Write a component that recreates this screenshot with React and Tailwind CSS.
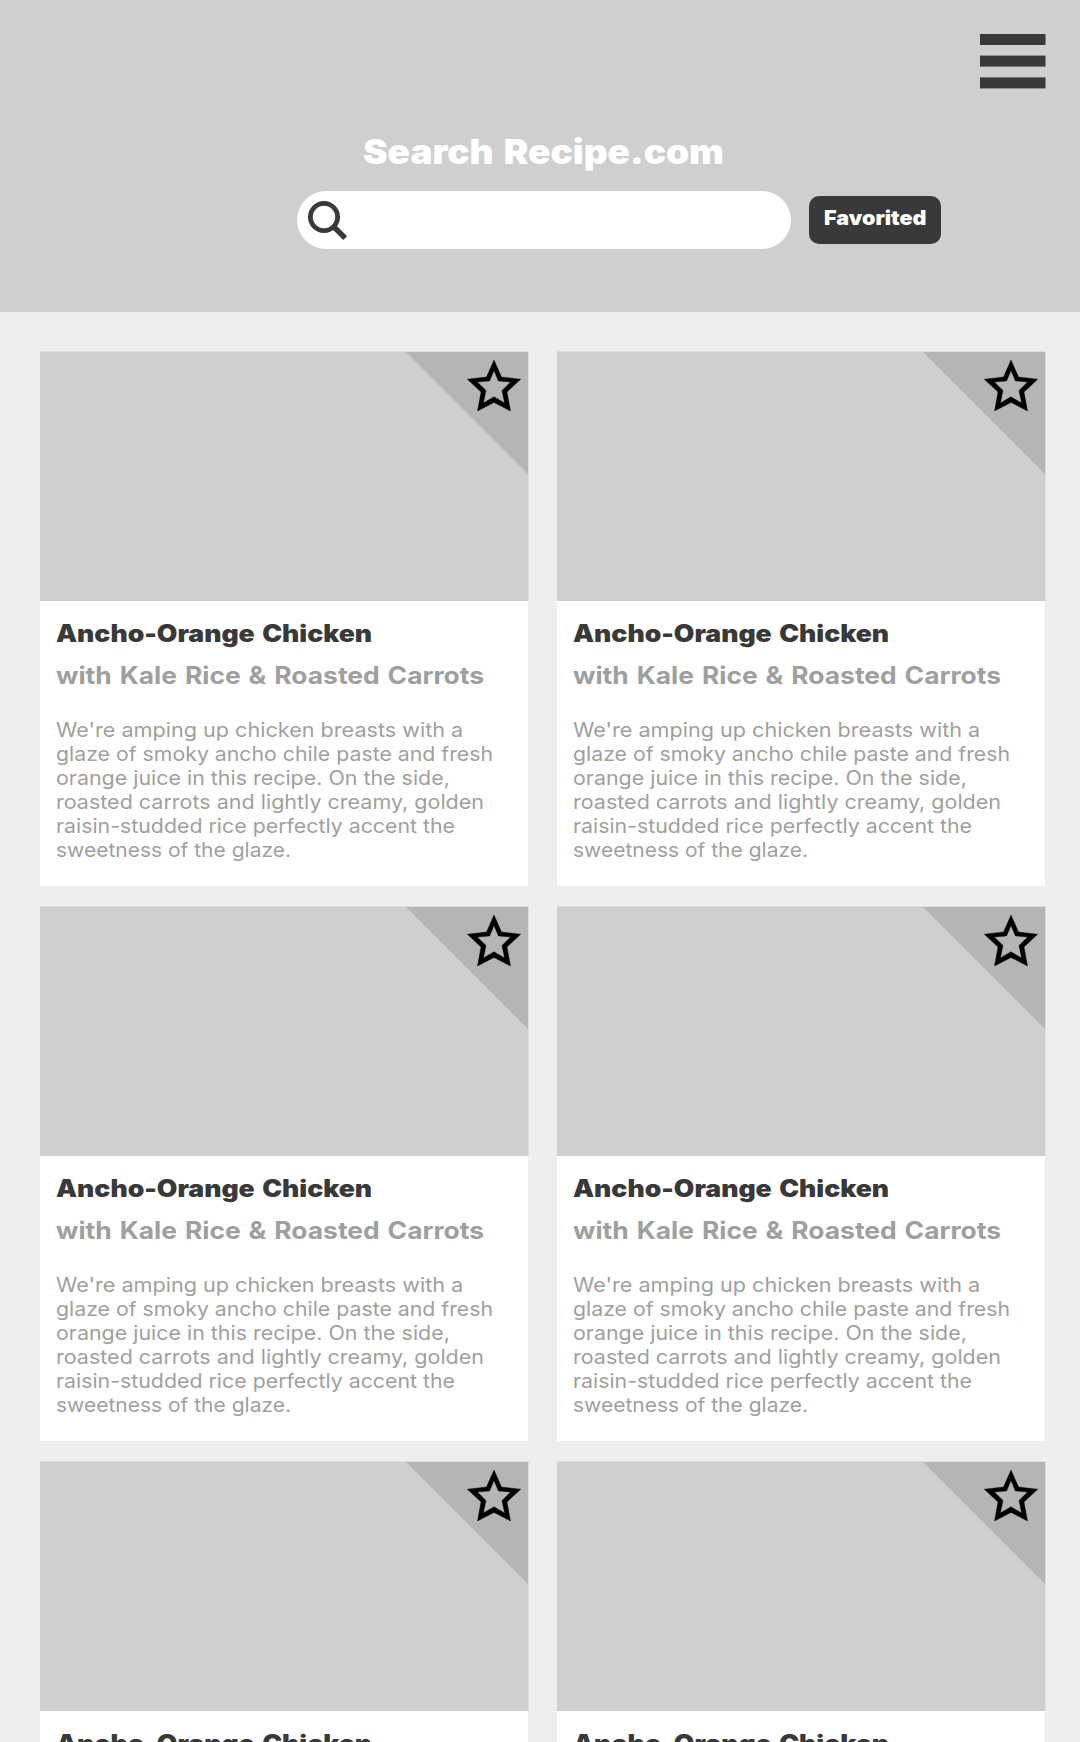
const DESCRIPTION = [
  ["We're amping up chicken breasts with a", 'scale-x-[1.108]'],
  ['glaze of smoky ancho chile paste and fresh', 'scale-x-[1.091]'],
  ['orange juice in this recipe. On the side,', 'scale-x-[1.098]'],
  ['roasted carrots and lightly creamy, golden', 'scale-x-[1.103]'],
  ['raisin-studded rice perfectly accent the', 'scale-x-[1.094]'],
  ['sweetness of the glaze.', 'scale-x-[1.077]'],
];

function Star() {
  return (
    <svg className="absolute right-[7px] top-[8px] h-[53px] w-[54px]" viewBox="0 0 54 53">
      <path
        fill="#000"
        fillRule="evenodd"
        d="M27 0L34.5 17L53.7 19.2L40 32L43.5 51L27 42.5L10.5 51L14 32L.3 19.2L19.5 17ZM27 10.5L22.6 20.9L10.4 22L19 30.6L16.4 43L27 36.8L37.6 43L35 30.6L43.6 22L31.4 20.9Z"
        stroke="#000"
        strokeWidth=".4"
      />
    </svg>
  );
}

function RecipeCard() {
  return (
    <article className="h-[535px] w-[489px]">
      <div className="relative h-[250px] overflow-hidden border-t border-r border-t-[#dedede] border-r-[#dedede] bg-[#cfcfcf]">
        <svg className="absolute right-0 top-0 h-[122px] w-[122px]" viewBox="0 0 122 122">
          <path d="M0 0H122V122Z" fill="#b5b5b5" />
        </svg>
        <Star />
      </div>
      <div className="h-[285px] w-[488px] bg-white px-4 pt-[17px]">
        <h2 className="h-8 origin-left scale-x-[1.107] whitespace-nowrap text-2xl leading-8 font-black text-[#393939] [word-spacing:2px]">
          Ancho-Orange Chicken
        </h2>
        <h3 className="mt-2.5 h-8 origin-left scale-x-[1.101] whitespace-nowrap text-2xl leading-8 font-bold text-[#9f9f9f] [word-spacing:1.5px]">
          with Kale Rice &amp; Roasted Carrots
        </h3>
        <p className="mt-[26px] text-[19.5px] leading-6 text-[#9f9f9f]">
          {DESCRIPTION.map(([line, scale]) => (
            <span key={line} className={`block origin-left whitespace-nowrap ${scale}`}>
              {line}
            </span>
          ))}
        </p>
      </div>
    </article>
  );
}

export default function App() {
  return (
    <div className="h-[1742px] w-[1080px] overflow-hidden bg-[#eeeeee] font-['Inter',sans-serif]">
      <header className="h-[312px] bg-[#cfcfcf] pt-[34px]">
        <div className="flex justify-end pr-[34px]">
          <button className="h-[55px] w-[66px]" aria-label="Menu">
            <svg className="h-[55px] w-[66px]" viewBox="0 0 66 55" fill="#393939">
              <rect width="65.5" height="11" />
              <rect y="21.6" width="65.5" height="11" />
              <rect y="43.4" width="65.5" height="11" />
            </svg>
          </button>
        </div>
        <h1 className="mt-[43px] ml-[363px] h-10 w-[362px] origin-left scale-x-[1.087] whitespace-nowrap text-[34px] leading-10 font-black text-white [word-spacing:2.5px]">
          Search Recipe.com
        </h1>
        <div className="mt-[19px] ml-[297px] flex items-center">
          <label className="flex h-[58px] w-[494px] items-center rounded-full bg-white pt-[2px] pl-[11px]">
            <svg className="h-[40px] w-[40px]" viewBox="0 0 40 40" fill="none" stroke="#393939">
              <circle cx="16" cy="16" r="13.6" strokeWidth="4.8" />
              <path d="M25.5 25.5L37.2 37.2" strokeWidth="5.4" />
            </svg>
          </label>
          <button className="ml-[18px] flex h-12 w-[132px] items-start rounded-[10px] bg-[#393939] pt-[10px] pl-[15px]">
            <span className="origin-left scale-x-[1.075] text-xl leading-6 font-black text-white">Favorited</span>
          </button>
        </div>
      </header>
      <main className="grid grid-cols-[489px_489px] gap-x-[28px] gap-y-5 pt-[39px] pl-[40px]">
        {[0, 1, 2, 3, 4, 5].map((i) => (
          <RecipeCard key={i} />
        ))}
      </main>
    </div>
  );
}
